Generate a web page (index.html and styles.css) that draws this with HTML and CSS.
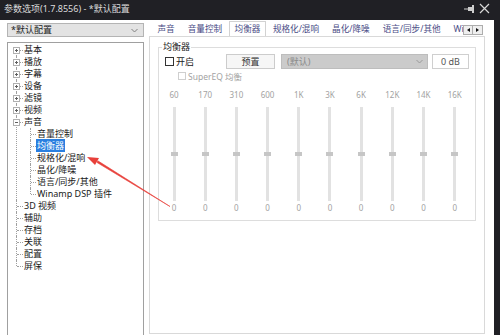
FILE: index.html
```html
<!DOCTYPE html>
<html lang="zh-CN">

<head>
    <meta charset="UTF-8">
    <title>参数选项</title>
    <link rel="stylesheet" href="styles.css">
</head>

<body>
    <div class="window">
        <div class="titlebar">
            <span class="title">参数选项(1.7.8556) - *默认配置</span>
            <span class="tb_icons">
                <svg width="12" height="10" viewBox="0 0 12 10">
                    <rect x="9" y="1" width="2" height="8" fill="#cfcfcf"/>
                    <rect x="5" y="3" width="4" height="4" fill="#cfcfcf"/>
                    <rect x="1" y="4.5" width="4" height="1" fill="#cfcfcf"/>
                </svg>
                <svg width="11" height="11" viewBox="0 0 11 11">
                    <path d="M1 1 L10 10 M10 1 L1 10" stroke="#d8d8d8" stroke-width="1.2"/>
                </svg>
            </span>
        </div>
        <div class="main">
            <div class="side">
                <div class="combo">
                    <span>*默认配置</span>
                    <svg width="7" height="5" viewBox="0 0 7 5">
                        <path d="M0.5 1 L3.5 4 L6.5 1" fill="none" stroke="#808080"/>
                    </svg>
                </div>
                <div class="treebox">
                    <ul class="tree">
                        <li><i class="exp plus"></i>基本</li>
                        <li><i class="exp plus"></i>播放</li>
                        <li><i class="exp plus"></i>字幕</li>
                        <li><i class="exp plus"></i>设备</li>
                        <li><i class="exp plus"></i>滤镜</li>
                        <li><i class="exp plus"></i>视频</li>
                        <li><i class="exp"></i>声音
                            <ul class="sub">
                                <li>音量控制</li>
                                <li><span class="sel">均衡器</span></li>
                                <li>规格化/混响</li>
                                <li>晶化/降噪</li>
                                <li>语言/同步/其他</li>
                                <li>Winamp DSP 插件</li>
                            </ul>
                        </li>
                        <li>3D 视频</li>
                        <li>辅助</li>
                        <li>存档</li>
                        <li>关联</li>
                        <li>配置</li>
                        <li>屏保</li>
                    </ul>
                </div>
            </div>
            <div class="content">
                <div class="tabs">
                    <div class="tabstrip">
                        <span class="tab">声音</span>
                        <span class="tab">音量控制</span>
                        <span class="tab active">均衡器</span>
                        <span class="tab">规格化/混响</span>
                        <span class="tab">晶化/降噪</span>
                        <span class="tab">语言/同步/其他</span>
                        <span class="tab">Wi</span>
                    </div>
                    <div class="tabscroll">
                        <span class="sbtn"><i class="tri_l"></i></span>
                        <span class="sbtn"><i class="tri_r"></i></span>
                    </div>
                </div>
                <div class="panel">
                    <fieldset class="group">
                        <legend>均衡器</legend>
                        <div class="row1">
                            <label class="chk"><i class="box"></i>开启</label>
                            <span class="btn">预置</span>
                            <span class="select">
                                <span>(默认)</span>
                                <svg width="7" height="5" viewBox="0 0 7 5">
                                    <path d="M0.5 1 L3.5 4 L6.5 1" fill="none" stroke="#9a9a9a"/>
                                </svg>
                            </span>
                            <span class="db">0 dB</span>
                        </div>
                        <div class="row2">
                            <label class="chk off"><i class="box"></i>SuperEQ 均衡</label>
                        </div>
                        <div class="bands">
                            <div class="band"><span class="freq">60</span><div class="track"><i class="thumb"></i></div><span class="val">0</span></div>
                            <div class="band"><span class="freq">170</span><div class="track"><i class="thumb"></i></div><span class="val">0</span></div>
                            <div class="band"><span class="freq">310</span><div class="track"><i class="thumb"></i></div><span class="val">0</span></div>
                            <div class="band"><span class="freq">600</span><div class="track"><i class="thumb"></i></div><span class="val">0</span></div>
                            <div class="band"><span class="freq">1K</span><div class="track"><i class="thumb"></i></div><span class="val">0</span></div>
                            <div class="band"><span class="freq">3K</span><div class="track"><i class="thumb"></i></div><span class="val">0</span></div>
                            <div class="band"><span class="freq">6K</span><div class="track"><i class="thumb"></i></div><span class="val">0</span></div>
                            <div class="band"><span class="freq">12K</span><div class="track"><i class="thumb"></i></div><span class="val">0</span></div>
                            <div class="band"><span class="freq">14K</span><div class="track"><i class="thumb"></i></div><span class="val">0</span></div>
                            <div class="band"><span class="freq">16K</span><div class="track"><i class="thumb"></i></div><span class="val">0</span></div>
                        </div>
                    </fieldset>
                </div>
            </div>
        </div>
        <!-- 标注箭头 -->
        <svg class="arrow" width="500" height="335" viewBox="0 0 500 335">
            <path d="M170 206.5 L97 162.5 L97.8 160.8 Z" fill="#e8403a" stroke="#e8403a" stroke-width="0.6"/>
            <path d="M87 157 L99 158 L95 165 Z" fill="#e8403a"/>
        </svg>
    </div>
</body>

</html>
```

FILE: styles.css
```css
html,
body {
    margin: 0;
    padding: 0;
}

body {
    width: 500px;
    height: 335px;
    overflow: hidden;
    font-family: "Noto Sans", "Noto Sans CJK SC", sans-serif;
    font-size: 9px;
    color: #1a1a1a;
}

.window {
    position: relative;
    width: 500px;
    height: 335px;
    display: flex;
    flex-direction: column;
    background: #202025;
}

.titlebar {
    height: 20px;
    flex: none;
    display: flex;
    align-items: center;
    justify-content: space-between;
    padding: 0 10px 0 4px;
    color: #dcdcdc;
    font-size: 9px;
}

.title {
    margin-top: -4px;
}

.tb_icons {
    display: flex;
    align-items: center;
    gap: 4px;
    margin-top: -3px;
}

.main {
    flex: 1;
    display: flex;
    background: #fff;
    margin-right: 6px;
    min-height: 0;
}

.side {
    width: 137px;
    flex: none;
    display: flex;
    flex-direction: column;
    padding: 3px 0 0 7px;
}

.combo {
    height: 14px;
    box-sizing: border-box;
    border: 1px solid #b4b4b4;
    background: #e3e3e3;
    display: flex;
    align-items: center;
    justify-content: space-between;
    padding: 0 5px 0 3px;
    line-height: 12px;
}

.treebox {
    flex: 1;
    margin-top: 5px;
    border: 1px solid #a0a0a0;
    border-bottom: none;
    overflow: hidden;
}

.tree,
.sub {
    list-style: none;
    margin: 0;
    padding: 0;
}

.tree {
    padding-top: 1px;
}

.tree li {
    position: relative;
    line-height: 12px;
    white-space: nowrap;
}

.tree>li {
    padding-left: 16px;
}

.tree>li::before {
    content: "";
    position: absolute;
    left: 8px;
    top: 0;
    bottom: 0;
    border-left: 1px dotted #a0a0a0;
}

.tree>li:first-child::before {
    top: 6px;
}

.tree>li:last-child::before {
    bottom: auto;
    height: 6px;
}

.tree>li::after {
    content: "";
    position: absolute;
    left: 9px;
    top: 6px;
    width: 6px;
    border-top: 1px dotted #a0a0a0;
}

.sub>li {
    padding-left: 13px;
}

.sub>li::before {
    content: "";
    position: absolute;
    left: 6px;
    top: 0;
    bottom: 0;
    border-left: 1px dotted #a0a0a0;
}

.sub>li:last-child::before {
    bottom: auto;
    height: 6px;
}

.sub>li::after {
    content: "";
    position: absolute;
    left: 7px;
    top: 6px;
    width: 5px;
    border-top: 1px dotted #a0a0a0;
}

.exp {
    position: absolute;
    left: 5px;
    top: 3px;
    width: 7px;
    height: 7px;
    box-sizing: border-box;
    border: 1px solid #b0b0b0;
    background: linear-gradient(#606060, #606060) center / 3px 1px no-repeat, #fff;
    z-index: 1;
}

.exp.plus {
    background: linear-gradient(#606060, #606060) center / 3px 1px no-repeat,
        linear-gradient(#606060, #606060) center / 1px 3px no-repeat, #fff;
}

.sel {
    background: #2a7fe0;
    color: #fff;
    padding: 0 1px;
    margin-left: -1px;
}

.content {
    flex: 1;
    display: flex;
    flex-direction: column;
    margin-left: 5px;
    min-width: 0;
}

.tabs {
    height: 16px;
    flex: none;
    display: flex;
    align-items: flex-end;
    position: relative;
    z-index: 1;
}

.tabstrip {
    flex: 1;
    display: flex;
    align-items: flex-end;
    overflow: hidden;
    padding-left: 2px;
    color: #4a4d86;
    font-size: 8.6px;
}

.tab {
    flex: none;
    padding: 0 6.5px;
    height: 14px;
    line-height: 14px;
    white-space: nowrap;
}

.tab:last-child {
    padding-right: 0;
}

.tab.active {
    box-sizing: border-box;
    border: 1px solid #d2d2d2;
    border-bottom: none;
    background: #fff;
    padding: 0 5px;
    margin: 0 0 -1px;
    height: 16px;
}

.tabscroll {
    display: flex;
    align-self: flex-start;
    margin: 5px 11px 0 0;
}

.sbtn {
    width: 10px;
    height: 10px;
    box-sizing: border-box;
    border: 1px solid #adadad;
    background: #efefef;
    display: flex;
    align-items: center;
    justify-content: center;
}

.sbtn+.sbtn {
    border-left: none;
}

.tri_l {
    border-right: 3px solid #111;
    border-top: 2.5px solid transparent;
    border-bottom: 2.5px solid transparent;
}

.tri_r {
    border-left: 3px solid #111;
    border-top: 2.5px solid transparent;
    border-bottom: 2.5px solid transparent;
}

.panel {
    flex: 1;
    border: 1px solid #d9d9d9;
    margin: 0 9px 1px 0;
    padding-top: 4px;
}

.group {
    width: 318px;
    box-sizing: border-box;
    margin: 0 0 0 8px;
    padding: 0 0 6px;
    border: 1px solid #dddddd;
    min-width: 0;
}

.group legend {
    padding: 0 1px;
    margin-left: 3px;
    line-height: 12px;
    color: #1a1a1a;
}

.row1 {
    display: flex;
    align-items: center;
    height: 15px;
    margin-top: 1px;
    padding-left: 6px;
}

.chk {
    display: flex;
    align-items: center;
    gap: 2px;
}

.row1 .chk {
    width: 61px;
}

.box {
    width: 9px;
    height: 9px;
    box-sizing: border-box;
    border: 1px solid #333;
    background: #fff;
}

.btn {
    width: 49px;
    height: 15px;
    box-sizing: border-box;
    border: 1px solid #cccccc;
    background: #f6f6f6;
    text-align: center;
    line-height: 13px;
    color: #333;
    margin-right: 6px;
}

.select {
    width: 147px;
    height: 15px;
    box-sizing: border-box;
    border: 1px solid #bdbdbd;
    background: #cbcbcb;
    color: #8a8a8a;
    display: flex;
    align-items: center;
    justify-content: space-between;
    padding: 0 4px 0 5px;
    margin-right: 4px;
}

.db {
    width: 37px;
    height: 15px;
    box-sizing: border-box;
    border: 1px solid #cfcfcf;
    text-align: center;
    line-height: 13px;
    color: #555;
}

.row2 {
    height: 10px;
    margin-top: 2px;
    padding-left: 19px;
    display: flex;
    align-items: center;
    font-size: 8.5px;
}

.chk.off {
    color: #a3a3a3;
}

.chk.off .box {
    width: 8px;
    height: 8px;
    border-color: #cfcfcf;
}

.bands {
    display: grid;
    grid-template-columns: repeat(10, 31.2px);
    margin: 8px 0 0 -0.6px;
}

.band {
    display: flex;
    flex-direction: column;
    align-items: center;
}

.freq,
.val {
    line-height: 12px;
    font-size: 8px;
    color: #a2a2a2;
}

.track {
    width: 3px;
    height: 94px;
    margin: 6px 0 1px;
    background: #e2e2e2;
    display: flex;
    align-items: center;
    justify-content: center;
}

.thumb {
    flex: none;
    width: 7px;
    height: 4px;
    background: #c6c6c6;
}

.arrow {
    position: absolute;
    left: 0;
    top: 0;
    pointer-events: none;
    z-index: 5;
}
```
